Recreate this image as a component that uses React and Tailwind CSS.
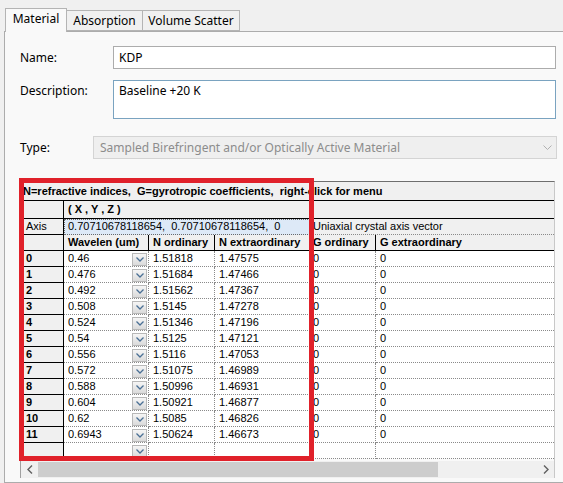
import React from "react";

const rows = [
  ["0", "0.46", "1.51818", "1.47575"],
  ["1", "0.476", "1.51684", "1.47466"],
  ["2", "0.492", "1.51562", "1.47367"],
  ["3", "0.508", "1.5145", "1.47278"],
  ["4", "0.524", "1.51346", "1.47196"],
  ["5", "0.54", "1.5125", "1.47121"],
  ["6", "0.556", "1.5116", "1.47053"],
  ["7", "0.572", "1.51075", "1.46989"],
  ["8", "0.588", "1.50996", "1.46931"],
  ["9", "0.604", "1.50921", "1.46877"],
  ["10", "0.62", "1.5085", "1.46826"],
  ["11", "0.6943", "1.50624", "1.46673"],
];

function DropButton() {
  return (
    <div className="ml-auto mr-[1px] mt-[2px] flex h-[13px] w-[15px] items-center justify-center border border-[#b8b8b8] bg-gradient-to-b from-[#f6f6f6] to-[#dadada]">
      <svg width="8" height="5" viewBox="0 0 8 5">
        <path d="M0.5 0.5 L4 4 L7.5 0.5" fill="none" stroke="#4a6f94" strokeWidth="1.3" />
      </svg>
    </div>
  );
}

function DataRow({ n, wl, no, ne, g1, g2 }) {
  return (
    <div className="flex h-[16px]">
      <div className="w-[43px] border-b border-r border-b-black border-r-black bg-[#f0f0f0] pl-[5px] font-bold leading-[15px]">
        {n}
      </div>
      <div className="flex w-[85px] border-b border-r border-dotted border-[#8a8a8a] bg-white pl-[4px] leading-[15px]">
        <span>{wl}</span>
        <DropButton />
      </div>
      <div className="w-[66px] border-b border-r border-dotted border-[#8a8a8a] bg-white pl-[4px] leading-[15px]">
        {no}
      </div>
      <div className="w-[95px] border-b border-r border-dotted border-[#8a8a8a] bg-white pl-[4px] leading-[15px]">
        {ne}
      </div>
      <div className="w-[66px] border-b border-r border-dotted border-[#8a8a8a] bg-white pl-[3px] leading-[15px]">
        {g1}
      </div>
      <div className="flex-1 border-b border-dotted border-[#8a8a8a] bg-white pl-[4px] leading-[15px]">
        {g2}
      </div>
    </div>
  );
}

export default function App() {
  return (
    <div className="relative h-[483px] w-[563px] overflow-hidden bg-[#f0f0f0] font-['Noto_Sans',sans-serif] text-[12px] text-black">
      <div className="flex items-end pl-[5px] pt-[8px]">
        <div className="relative z-10 -mb-px flex h-[24px] w-[62px] items-center justify-center border border-b-0 border-[#b4b4b4] bg-[#f9f9f9] pb-[3px]">
          Material
        </div>
        <div className="flex h-[21px] w-[76px] items-center justify-center border border-l-0 border-[#b4b4b4] bg-[#f0f0f0]">
          Absorption
        </div>
        <div className="flex h-[21px] w-[97px] items-center justify-center border border-l-0 border-[#b4b4b4] bg-[#f0f0f0]">
          Volume Scatter
        </div>
      </div>

      <div className="ml-[4px] h-[452px] w-[570px] border border-[#acacac] bg-[#f9f9f9] px-[15px] pt-[14px]">
        <div className="flex h-[23px] items-center">
          <div className="w-[93px]">Name:</div>
          <div className="flex h-[23px] w-[443px] items-center border border-[#acacac] bg-white pl-[5px]">KDP</div>
        </div>
        <div className="mt-[11px] flex">
          <div className="w-[93px] pt-[2px]">Description:</div>
          <div className="h-[39px] w-[443px] border border-[#7aa3c0] bg-white pl-[5px] pt-[1px]">Baseline +20 K</div>
        </div>
        <div className="mt-[17px] flex h-[23px] items-center">
          <div className="w-[73px]">Type:</div>
          <div className="flex h-[23px] w-[464px] items-center border border-[#d4d4d4] bg-[#efefef] pl-[6px] text-[#8c8c8c]">
            <span className="flex-1">Sampled Birefringent and/or Optically Active Material</span>
            <svg className="mr-[4px]" width="9" height="6" viewBox="0 0 9 6">
              <path d="M0.5 0.5 L4.5 4.5 L8.5 0.5" fill="none" stroke="#b0b0b0" strokeWidth="1" />
            </svg>
          </div>
        </div>

        <div className="mt-[22px] w-[535px] border-l border-t border-r border-l-[#a0a0a0] border-t-[#6e6e6e] border-r-[#c8c8c8] font-['Liberation_Sans',Arial,sans-serif] text-[11px]">
          <div className="h-[19px] whitespace-pre border-b border-black bg-[#f0f0f0] pl-[2px] font-bold leading-[18px]">
            {"N=refractive indices,  G=gyrotropic coefficients,  right-click for menu"}
          </div>
          <div className="flex h-[18px] border-b border-black bg-[#f0f0f0] leading-[17px]">
            <div className="w-[43px] border-r border-black" />
            <div className="flex-1 whitespace-pre pl-[4px] font-bold">{"( X , Y , Z )"}</div>
          </div>
          <div className="flex h-[16px] leading-[15px]">
            <div className="w-[43px] border-b border-r border-black bg-[#f0f0f0] pl-[5px]">
              Axis
            </div>
            <div className="w-[246px] whitespace-pre border border-dotted border-[#6a6a6a] bg-[#dde9f7] pl-[3px] leading-[13px]">
              {"0.70710678118654,  0.70710678118654,  0"}
            </div>
            <div className="flex-1 border-b border-dotted border-[#8a8a8a] bg-[#f0f0f0] pl-[3px]">
              Uniaxial crystal axis vector
            </div>
          </div>
          <div className="flex h-[16px] border-b border-black bg-[#f0f0f0] font-bold leading-[15px]">
            <div className="w-[43px] border-r border-black" />
            <div className="w-[85px] border-r border-black pl-[4px]">Wavelen (um)</div>
            <div className="w-[66px] border-r border-black pl-[4px]">N ordinary</div>
            <div className="w-[95px] border-r border-black pl-[4px]">N extraordinary</div>
            <div className="w-[66px] border-r border-black pl-[3px]">G ordinary</div>
            <div className="flex-1 pl-[4px]">G extraordinary</div>
          </div>
          {rows.map((r) => (
            <DataRow key={r[0]} n={r[0]} wl={r[1]} no={r[2]} ne={r[3]} g1="0" g2="0" />
          ))}
          <DataRow n="" wl="" no="" ne="" g1="" g2="" />
          <div className="flex h-[19px] items-end bg-[#f9f9f9]">
            <div className="flex h-[17px] w-full items-center bg-[#f0f0f0]">
              <div className="flex w-[17px] items-center justify-center">
                <svg width="6" height="9" viewBox="0 0 6 9">
                  <path d="M5 0.5 L1 4.5 L5 8.5" fill="none" stroke="#606060" strokeWidth="1.4" />
                </svg>
              </div>
              <div className="h-[15px] w-[400px] bg-[#cdcdcd]" />
              <div className="flex-1" />
              <div className="flex w-[17px] items-center justify-center">
                <svg width="6" height="9" viewBox="0 0 6 9">
                  <path d="M1 0.5 L5 4.5 L1 8.5" fill="none" stroke="#606060" strokeWidth="1.4" />
                </svg>
              </div>
            </div>
          </div>
        </div>
      </div>

      <div className="absolute left-[19px] top-[178px] h-[283px] w-[295px] border-[5px] border-[#e0212a]" />
    </div>
  );
}
